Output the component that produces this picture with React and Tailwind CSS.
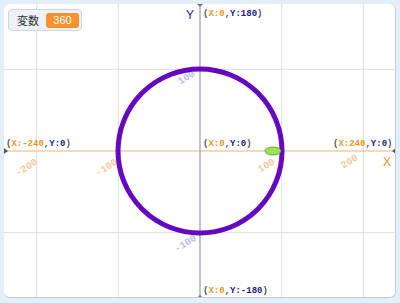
import React from 'react';

const S = 0.8167;
const CX = 196;
const CY = 147;

const gridX = [-200, -100, 100, 200].map(v => CX + v * S);
const gridY = [-100, 100].map(v => CY + v * S);

const ticks = [
  { x: 24, y: 166, t: '-200', c: '#f2caa2' },
  { x: 104, y: 166, t: '-100', c: '#f2caa2' },
  { x: 264, y: 164, t: '100', c: '#f2caa2' },
  { x: 347, y: 160, t: '200', c: '#f2caa2' },
  { x: 184, y: 76, t: '100', c: '#bcbce6' },
  { x: 183, y: 242, t: '-100', c: '#bcbce6' },
];

function Coord({ x, y, xs, ys }) {
  return (
    <text x={x} y={y} fontFamily="'Liberation Mono', monospace" fontWeight="bold" fontSize="9" fill="#555">
      (<tspan fill="#e8962a">X:{xs}</tspan>,<tspan fill="#1c1c8c">Y:{ys}</tspan>)
    </text>
  );
}

export default function App() {
  return (
    <div className="w-[400px] h-[303px] bg-[#e4eefa] p-[4px] pb-[5px]">
      <div className="relative w-[392px] h-[294px] bg-white rounded-[6px] overflow-hidden border-r border-b border-[#c4ccd8]">
        <svg className="absolute inset-0" width="392" height="294" viewBox="0 0 392 294">
          {gridX.map(x => (
            <line key={x} x1={x} y1="0" x2={x} y2="294" stroke="#dedede" strokeWidth="1" />
          ))}
          {gridY.map(y => (
            <line key={y} x1="0" y1={y} x2="392" y2={y} stroke="#dedede" strokeWidth="1" />
          ))}

          {/* axes */}
          <line x1="0" y1={CY} x2="392" y2={CY} stroke="#e9b579" strokeWidth="1.2" />
          <line x1={CX} y1="0" x2={CX} y2="294" stroke="#9a98b0" strokeWidth="1.2" />
          <polygon points={`0,${CY - 3} 4,${CY} 0,${CY + 3}`} fill="#555" />
          <polygon points={`392,${CY - 3} 388,${CY} 392,${CY + 3}`} fill="#555" />
          <polygon points={`${CX - 3},0 ${CX + 3},0 ${CX},3`} fill="#777" />
          <polygon points={`${CX - 3},294 ${CX + 3},294 ${CX},291`} fill="#777" />

          {ticks.map(t => (
            <text
              key={t.t + t.x}
              x={t.x}
              y={t.y}
              textAnchor="middle"
              fontFamily="'Liberation Mono', monospace"
              fontWeight="bold"
              fontSize="10"
              fill={t.c}
              transform={`rotate(-32 ${t.x} ${t.y})`}
            >
              {t.t}
            </text>
          ))}

          <circle cx={CX} cy={CY} r={82} fill="none" stroke="#6608c0" strokeWidth="5" />
          <ellipse cx="269" cy={CY} rx="8" ry="4" fill="#9be356" stroke="#4f9a25" strokeWidth="0.8" />

          <Coord x={199} y={12} xs="0" ys="180" />
          <Coord x={2} y={142} xs="-240" ys="0" />
          <Coord x={199} y={142} xs="0" ys="0" />
          <Coord x={329} y={142} xs="240" ys="0" />
          <Coord x={199} y={289} xs="0" ys="-180" />

          <text x="379" y="162" fontFamily="'Liberation Sans', sans-serif" fontSize="12" fill="#e8962a">X</text>
          <text x="182" y="15" fontFamily="'Liberation Sans', sans-serif" fontSize="12" fill="#1c1c8c">Y</text>
        </svg>

        <div className="absolute left-[4px] top-[5px] w-[74px] h-[22px] flex items-center gap-[7px] pl-[8px] bg-[#eef2f8] border border-[#cdd6e2] rounded-[4px]">
          <span className="text-[11px] text-[#333] font-['Noto_Sans_CJK_JP',sans-serif] leading-none">変数</span>
          <span className="w-[33px] h-[15px] flex items-center justify-center bg-[#f7922e] rounded-[3px] text-white text-[11px] leading-none font-['Liberation_Sans',sans-serif]">360</span>
        </div>
      </div>
    </div>
  );
}
